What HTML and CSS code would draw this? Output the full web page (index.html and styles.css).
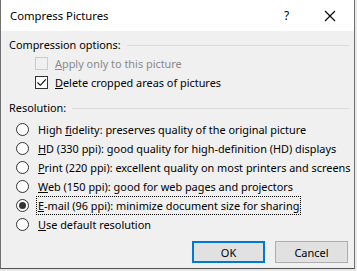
FILE: index.html
```html
<!DOCTYPE html>
<html lang="en">
<head>
  <meta charset="UTF-8" />
  <link rel="stylesheet" href="styles.css">
</head>
<body>
  <div class="dialog">
    <div class="titlebar">
      <span class="title">Compress Pictures</span>
      <span class="help">?</span>
      <svg class="close" width="12" height="12" viewBox="0 0 12 12">
        <path d="M1 1 L11 11 M11 1 L1 11" stroke="#000" stroke-width="1.1" fill="none"/>
      </svg>
    </div>

    <div class="content">
      <div class="group-head">
        <span>Compression options:</span>
        <span class="rule"></span>
      </div>
      <div class="checks">
        <div class="row disabled">
          <span class="checkbox"></span>
          <span class="label"><u>A</u>pply only to this picture</span>
        </div>
        <div class="row">
          <span class="checkbox">
            <svg width="11" height="11" viewBox="0 0 11 11">
              <path d="M1.5 5.5 L4.3 8.3 L9.8 2.3" stroke="#000" stroke-width="1.1" fill="none"/>
            </svg>
          </span>
          <span class="label"><u>D</u>elete cropped areas of pictures</span>
        </div>
      </div>

      <div class="group-head res-head">
        <span>Resolution:</span>
        <span class="rule"></span>
      </div>
      <div class="radios">
        <div class="row"><span class="radio"></span><span class="label">High <u>f</u>idelity: preserves quality of the original picture</span></div>
        <div class="row"><span class="radio"></span><span class="label"><u>H</u>D (330 ppi): good quality for high-definition (HD) displays</span></div>
        <div class="row"><span class="radio"></span><span class="label"><u>P</u>rint (220 ppi): excellent quality on most printers and screens</span></div>
        <div class="row"><span class="radio"></span><span class="label"><u>W</u>eb (150 ppi): good for web pages and projectors</span></div>
        <div class="row"><span class="radio checked"></span><span class="label focus"><u>E</u>-mail (96 ppi): minimize document size for sharing</span></div>
        <div class="row"><span class="radio"></span><span class="label"><u>U</u>se default resolution</span></div>
      </div>

      <div class="buttons">
        <button class="btn default">OK</button>
        <button class="btn">Cancel</button>
      </div>
    </div>
  </div>
</body>
</html>
```

FILE: styles.css
```css
:root {
  --face: #F0F0F0;
  --text: #000000;
  --muted: #8A8A8A;
  --rule: #DCDCDC;
  --accent: #0078D7;
  --font-base: 'Noto Sans', 'Liberation Sans', sans-serif;
}
*, *::before, *::after { box-sizing: border-box; }
body {
  margin: 0;
  width: 357px;
  height: 271px;
  overflow: hidden;
  background: #E8E8E8;
  font-family: var(--font-base);
  font-size: 10.9px;
  color: var(--text);
}
.dialog {
  width: 355px;
  height: 269px;
  background: var(--face);
  border-left: 1px solid #707070;
  border-right: 1px solid #707070;
  border-bottom: 1px solid #505050;
  display: flex;
  flex-direction: column;
}
.titlebar {
  height: 31px;
  flex: none;
  background: #FFFFFF;
  display: flex;
  align-items: center;
  padding-left: 9px;
}
.titlebar .title { flex: 1; font-size: 11.3px; }
.titlebar .help { width: 40px; font-size: 12px; text-align: left; }
.titlebar .close { margin-right: 18px; }

.content {
  flex: 1;
  padding: 4px 5px 0 8px;
  display: flex;
  flex-direction: column;
}
.group-head {
  height: 19px;
  display: flex;
  align-items: center;
  gap: 6px;
  white-space: nowrap;
}
.group-head .rule { flex: 1; border-top: 1px solid var(--rule); margin-top: 1px; }
.res-head { margin-top: 6px; }

.row {
  height: 19px;
  display: flex;
  align-items: center;
  white-space: nowrap;
}
.checks { padding-left: 26px; }
.checks .row { gap: 7px; }
.checkbox {
  width: 13px;
  height: 13px;
  flex: none;
  border: 1px solid #333;
  background: #FFFFFF;
  display: flex;
  align-items: center;
  justify-content: center;
}
.disabled .checkbox { border-color: #CCCCCC; background: var(--face); }
.disabled .label { color: var(--muted); }

.radios { margin-top: 3px; padding-left: 7px; }
.radios .row { gap: 9px; }
.radio {
  width: 13px;
  height: 13px;
  flex: none;
  border: 1px solid #333;
  border-radius: 50%;
  background: #FFFFFF;
  display: flex;
  align-items: center;
  justify-content: center;
}
.radio.checked::after {
  content: "";
  width: 7px;
  height: 7px;
  border-radius: 50%;
  background: #333;
}
.label.focus { outline: 1px dotted #000; outline-offset: 1px; }

.buttons {
  margin-top: 7px;
  display: flex;
  justify-content: flex-end;
  gap: 10px;
  padding-right: 1px;
}
.btn {
  width: 73px;
  height: 22px;
  font-family: var(--font-base);
  font-size: 11px;
  background: #E1E1E1;
  border: 1px solid #ADADAD;
  padding: 0;
  color: var(--text);
}
.btn.default { border: 2px solid var(--accent); }
```
